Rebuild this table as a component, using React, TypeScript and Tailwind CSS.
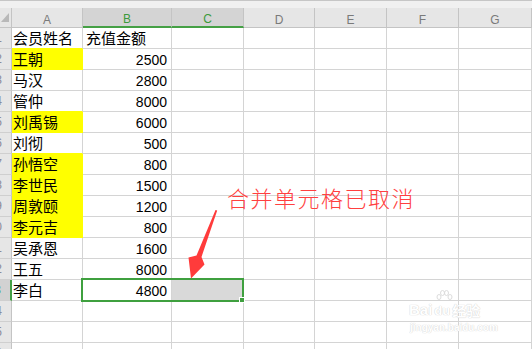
import React from "react";

const rows: { name: string; amount: string; yellow?: boolean }[] = [
  { name: "会员姓名", amount: "充值金额" },
  { name: "王朝", amount: "2500", yellow: true },
  { name: "马汉", amount: "2800" },
  { name: "管仲", amount: "8000" },
  { name: "刘禹锡", amount: "6000", yellow: true },
  { name: "刘彻", amount: "500" },
  { name: "孙悟空", amount: "800", yellow: true },
  { name: "李世民", amount: "1500", yellow: true },
  { name: "周敦颐", amount: "1200", yellow: true },
  { name: "李元吉", amount: "800", yellow: true },
  { name: "吴承恩", amount: "1600" },
  { name: "王五", amount: "8000" },
  { name: "李白", amount: "4800" },
  { name: "", amount: "" },
  { name: "", amount: "" },
  { name: "", amount: "" },
];

const cols = "grid grid-cols-[12px_71px_89px_72px_71px_72px_72px_73px_1fr]";
const cjk = "font-['Noto_Sans_CJK_SC','Noto_Sans',sans-serif]";
const lat = "font-['Liberation_Sans','Noto_Sans_CJK_SC',sans-serif]";

export default function App() {
  return (
    <div className={`relative w-[532px] h-[349px] overflow-hidden bg-white ${cjk}`}>
      {/* top strip */}
      <div className="h-[8px] bg-[#f0f0f0] border-t border-[#c6c6c6]" />
      {/* column header */}
      <div className={`${cols} h-[20px]`}>
        <div className="relative bg-[#e6e6e6] border-r border-b border-[#c4c4c4]">
          <svg className="absolute left-0 top-0" width="12" height="20" viewBox="0 0 12 20">
            <polygon points="9,5 9,14 1,14" fill="#b8b8b8" />
          </svg>
        </div>
        {["A", "B", "C", "D", "E", "F", "G", ""].map((c, i) => {
          const sel = c === "B" || c === "C";
          return (
            <div
              key={i}
              className={`flex items-end justify-center pb-[1px] text-[12px] leading-[12px] ${lat} ${
                sel
                  ? "bg-[#d4d4d4] text-[#3c9a3c] border-b-2 border-b-[#45a045] border-r border-r-[#c4c4c4]"
                  : "bg-[#e6e6e6] text-[#7a7a7a] border-b border-r border-[#c4c4c4]"
              }`}
            >
              {c}
            </div>
          );
        })}
      </div>
      {/* body */}
      {rows.map((r, i) => {
        const nextYellow = rows[i + 1]?.yellow;
        const isSel = i === 12;
        const isNum = i > 0;
        return (
          <div key={i} className={`${cols} h-[21px]`}>
            <div
              className={`relative overflow-hidden border-b border-[#cfcfcf] ${
                isSel
                  ? "bg-[#d2d2d2] border-r-2 border-r-[#45a045]"
                  : "bg-[#e6e6e6] border-r border-r-[#c4c4c4]"
              }`}
            >
              <span
                className={`absolute right-[9px] top-[3px] text-[12px] leading-[14px] ${lat} ${
                  isSel ? "text-[#3c9a3c]" : "text-[#8a8a9a]"
                }`}
              >
                {i + 1}
              </span>
            </div>
            <div
              className={`flex items-center pl-[1px] text-[15px] leading-[20px] text-black border-r border-b ${
                r.yellow
                  ? "bg-[#ffff00] border-[#ffff00]"
                  : nextYellow
                  ? "border-r-[#d4d4d4] border-b-[#ffff00]"
                  : "border-[#d4d4d4]"
              }`}
            >
              {r.name}
            </div>
            <div
              className={`flex items-center border-r border-b border-[#d4d4d4] text-black ${
                isNum
                  ? `justify-end pr-[4px] pt-[2px] text-[14px] leading-[16px] ${lat}`
                  : "pl-[3px] text-[15px] leading-[20px]"
              }`}
            >
              {r.amount}
            </div>
            <div className={`border-r border-b border-[#d4d4d4] ${isSel ? "bg-[#d9d9d9]" : ""}`} />
            <div className="border-r border-b border-[#d4d4d4]" />
            <div className="border-r border-b border-[#d4d4d4]" />
            <div className="border-r border-b border-[#d4d4d4]" />
            <div className="border-r border-b border-[#d4d4d4]" />
            <div className="border-b border-[#d4d4d4]" />
          </div>
        );
      })}

      {/* selection box */}
      <div className="absolute left-[81px] top-[278px] w-[163px] h-[24px] border-[2.5px] border-[#3fa03f]" />
      <div className="absolute left-[239px] top-[297px] w-[6px] h-[6px] bg-[#3fa03f] border border-white" />

      {/* annotation */}
      <div
        className={`absolute left-[227px] top-[186px] text-[22px] leading-[22px] tracking-[1.5px] font-light text-[#ff4040] whitespace-nowrap font-['Noto_Sans_CJK_SC',serif]`}
      >
        合并单元格已取消
      </div>
      <svg className="absolute left-0 top-0 pointer-events-none" width="532" height="349">
        <polygon
          points="215.5,210 217.2,210.6 201.5,257 204.5,264.5 191,278.5 188.5,257.5 196.5,255.5"
          fill="#ff3b3b"
        />
      </svg>

      {/* watermark */}
      <div className={`absolute left-[409px] top-[302px] flex items-end gap-[2px] ${lat}`}>
        <span className="text-[15px] leading-[16px] font-bold text-white [text-shadow:0_0_1px_#d2d2d2,0_0_1px_#d2d2d2]">
          Bai
        </span>
        <span className="relative text-[13px] leading-[14px] font-bold text-white [text-shadow:0_0_1px_#d2d2d2,0_0_1px_#d2d2d2]">
          <svg className="absolute left-[1px] top-[-14px]" width="18" height="14" viewBox="0 0 18 14">
            <g fill="none" stroke="#dcdcdc" strokeWidth="1">
              <ellipse cx="4" cy="7" rx="2" ry="2.5" />
              <ellipse cx="7.5" cy="3" rx="2" ry="2.5" />
              <ellipse cx="11.5" cy="3" rx="2" ry="2.5" />
              <ellipse cx="15" cy="7" rx="2" ry="2.5" />
            </g>
          </svg>
          du
        </span>
        <span
          className={`text-[14px] leading-[16px] font-bold text-white [text-shadow:0_0_1px_#d2d2d2,0_0_1px_#d2d2d2] ${cjk}`}
        >
          经验
        </span>
      </div>
      <div
        className={`absolute left-[410px] top-[322px] text-[10px] leading-[12px] font-bold text-white [text-shadow:0_0_1px_#d6d6d6,0_0_1px_#d6d6d6] ${lat}`}
      >
        jingyan.baidu.com
      </div>
    </div>
  );
}
